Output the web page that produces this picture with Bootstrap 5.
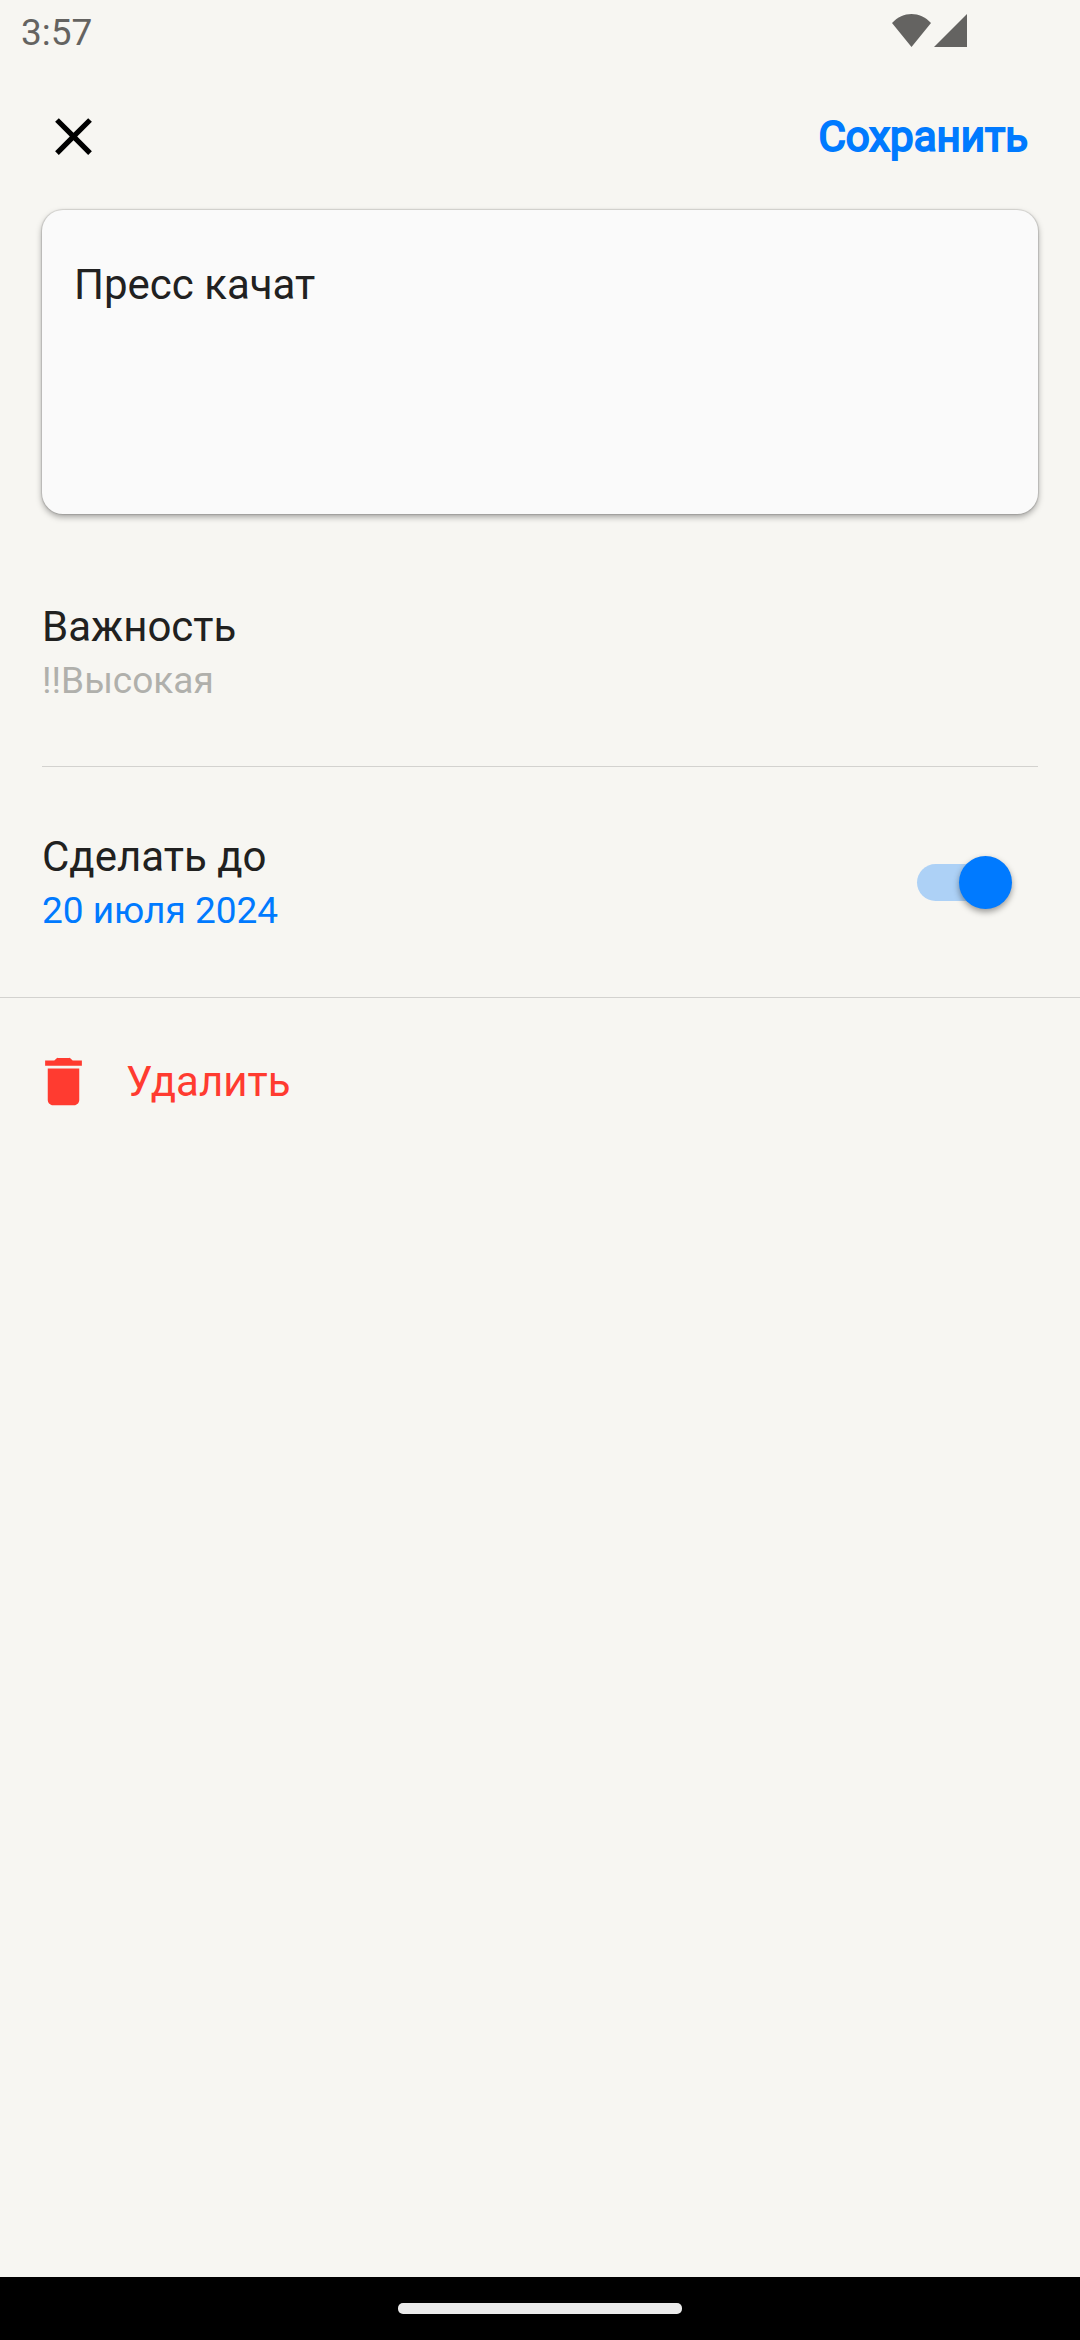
<!DOCTYPE html>
<html lang="ru">
<head>
<meta charset="utf-8">
<meta name="viewport" content="width=device-width, initial-scale=1">
<title>Дело</title>
<link href="https://cdn.jsdelivr.net/npm/bootstrap@5.3.0/dist/css/bootstrap.min.css" rel="stylesheet">
<style>
  body { background: #f7f6f2; color: #212120; font-family: Roboto, "Noto Sans", sans-serif; font-size: 42px; line-height: 50px; }
  .plain-btn { background: none; border: 0; padding: 0; color: inherit; font: inherit; text-align: left; }
  .status-bar { height: 63px; padding: 11px 113px 0 21px; color: #646361; }
  .small-text { font-size: 37px; line-height: 44px; }
  .status-icons { gap: 3px; padding-top: 3px; }
  .top-bar { height: 147px; padding: 0 52px 0 42px; }
  .close-btn { color: #000; line-height: 0; }
  .blue-text { color: #007aff; }
  .save-btn { color: #007aff; -webkit-text-stroke: 2px #007aff; }
  .note-card { margin: 0 42px 23px; background: #fafafa; border-radius: 21px; box-shadow: 0 0 1px 1px rgba(0,0,0,.12), 0 3px 6px rgba(0,0,0,.34); }
  .note-input { display: block; width: 100%; height: 304px; padding: 50px 32px; border: 0; outline: 0; resize: none; background: none; color: #212121; }
  .field-text { gap: 7px; }
  .importance-row { margin: 0 42px; padding: 65px 0 63px; border-bottom: 1px solid #d3d2cf; }
  .deadline-row { padding: 65px 68px 64px 42px; border-bottom: 1px solid #d3d2cf; }
  .muted-text { color: #b0b0ac; }
  .toggle { appearance: none; position: relative; width: 95px; height: 53px; margin: 0; }
  .toggle::before { content: ""; position: absolute; left: 0; right: 6px; top: 8px; bottom: 8px; border-radius: 19px; background: #add1f6; }
  .toggle::after { content: ""; position: absolute; right: 0; top: 0; width: 53px; height: 53px; border-radius: 50%; background: #007aff; box-shadow: 0 3px 6px rgba(0,0,0,.38); }
  .toggle:not(:checked)::after { right: 42px; background: #fff; }
  .delete-row { padding: 52px 32px; }
  .delete-btn { gap: 31px; color: #ff3b30; }
  .nav-strip { height: 63px; background: #000; }
  .nav-pill { width: 284px; height: 11px; border-radius: 5px; background: #ebebeb; }
</style>
<script src="https://cdn.jsdelivr.net/npm/bootstrap@5.3.0/dist/js/bootstrap.bundle.min.js"></script>
</head>
<body class="d-flex flex-column min-vh-100">
  <div class="status-bar d-flex align-items-start justify-content-between">
    <span class="small-text">3:57</span>
    <div class="status-icons d-flex align-items-end">
      <svg width="39" height="33" viewBox="0 0 39 33" fill="currentColor" aria-hidden="true"><path d="M0 9C11-3 28-3 39 9L19.500 33z"/></svg>
      <svg width="33" height="33" viewBox="0 0 33 33" fill="currentColor" aria-hidden="true"><path d="M33 0v33H0z"/></svg>
    </div>
  </div>

  <header class="top-bar d-flex align-items-center justify-content-between">
    <button type="button" class="plain-btn close-btn" aria-label="Закрыть">
      <svg width="63" height="63" viewBox="0 0 24 24" fill="currentColor"><path d="M19 6.410 17.590 5 12 10.590 6.410 5 5 6.410 10.590 12 5 17.590 6.410 19 12 13.410 17.590 19 19 17.590 13.410 12z"/></svg>
    </button>
    <button type="submit" form="task" class="plain-btn save-btn">Сохранить</button>
  </header>

  <main class="flex-grow-1">
    <form id="task">
      <div class="note-card">
        <textarea class="note-input" aria-label="Что надо сделать">Пресс качат</textarea>
      </div>

      <div class="importance-row">
        <button type="button" class="plain-btn field-text d-flex flex-column w-100">
          <span>Важность</span>
          <span class="small-text muted-text">!!Высокая</span>
        </button>
      </div>

      <div class="deadline-row d-flex align-items-center justify-content-between">
        <div class="field-text d-flex flex-column align-items-start">
          <label for="deadline">Сделать до</label>
          <button type="button" class="plain-btn small-text blue-text">20 июля 2024</button>
        </div>
        <input class="toggle" type="checkbox" role="switch" id="deadline" checked>
      </div>

      <div class="delete-row">
        <button type="button" class="plain-btn delete-btn d-flex align-items-center">
          <svg width="63" height="63" viewBox="0 0 24 24" fill="currentColor" aria-hidden="true"><path d="M6 19c0 1.100.900 2 2 2h8c1.100 0 2-.900 2-2V7H6z"/><path d="M19 4h-3.500l-.710-.710A1 1 0 0 0 14.080 3H9.920a1 1 0 0 0-.710.290L8.500 4H5v2h14z"/></svg>
          <span>Удалить</span>
        </button>
      </div>
    </form>
  </main>

  <footer class="nav-strip d-flex align-items-center justify-content-center">
    <div class="nav-pill"></div>
  </footer>
</body>
</html>
